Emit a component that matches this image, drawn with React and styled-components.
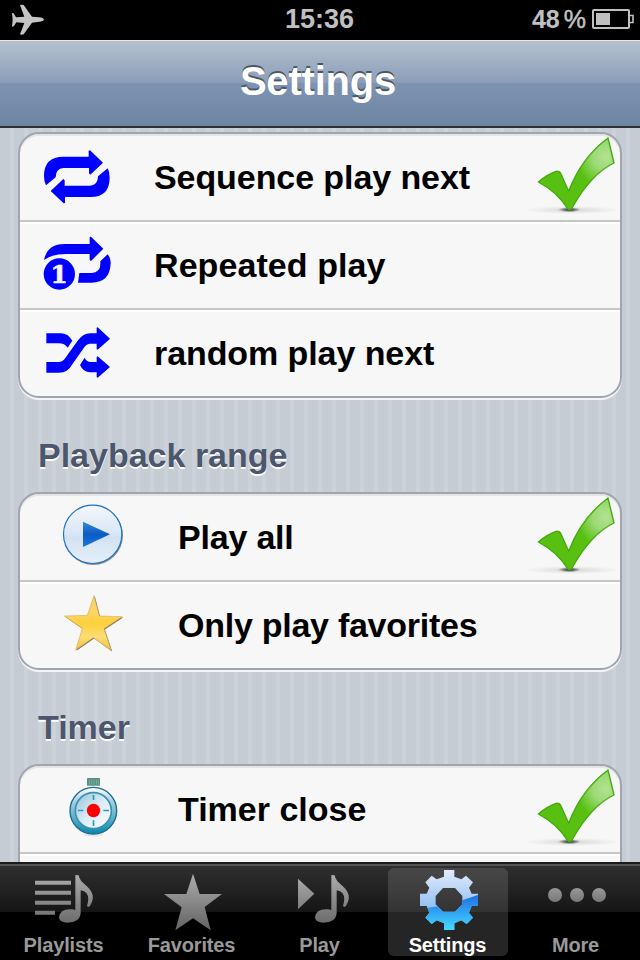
import styled, {createGlobalStyle} from "styled-components";

const GlobalStyle = createGlobalStyle`
  * {
    box-sizing: border-box;
  }
  body {
    margin: 0;
    background: #000;
    font-family: "Liberation Sans", Arial, sans-serif;
    font-weight: bold;
  }
`;

const Screen = styled.div`
  display: flex;
  flex-direction: column;
  width: 640px;
  height: 960px;
  overflow: hidden;
`;

const StatusBar = styled.header`
  display: grid;
  grid-template-columns: 1fr auto 1fr;
  align-items: center;
  flex: none;
  height: 40px;
  padding: 0 6px 2px 12px;
  background: #000;
  color: #c0c0c0;
  svg {
    display: block;
  }
`;
const Clock = styled.span`
  padding: 1px 7px 0 0;
  font-size: 27px;
  line-height: 37px;
`;
const Power = styled.div`
  display: flex;
  align-items: center;
  justify-content: flex-end;
  font-size: 25px;
  line-height: 38px;
`;
const Percent = styled.span`
  margin: 0 6px 0 4px;
  font-weight: normal;
  -webkit-text-stroke: 0.5px #c0c0c0;
`;

const NavBar = styled.div`
  flex: none;
  height: 88px;
  border-top: 1px solid #e3e6e2;
  border-bottom: 2px solid #2d3035;
  background: linear-gradient(#b5c1cf, #8a9cb7 50%, #7e93b2 50%, #6e84a3);
  text-align: center;
`;
const Title = styled.h1`
  margin: 0;
  padding-right: 4px;
  font-size: 40px;
  line-height: 80px;
  letter-spacing: -0.2px;
  color: #fff;
  text-shadow: 0 -2px 0 #4b5766;
`;

const Content = styled.main`
  flex: 1;
  min-height: 0;
  overflow: hidden;
  padding: 4px 18px 0;
  background: repeating-linear-gradient(90deg, #c5ccd4 0 10px, #cbd2d9 10px 14px);
`;
const SectionTitle = styled.h2`
  margin: 0;
  height: 94px;
  padding: 9px 0 0 20px;
  font-size: 34px;
  line-height: 96px;
  color: #4c566c;
  text-shadow: 0 2px 0 #fff;
`;
const Card = styled.section`
  border: 2px solid #a0a5ad;
  border-radius: 21px;
  background: #f7f7f7;
  box-shadow: 0 2px 0 #f3f5f6, inset 0 2px 0 #e4e5e6;
`;
const Row = styled.div`
  display: flex;
  height: 86px;
  & + & {
    height: 88px;
    border-top: 2px solid #c6c6c7;
    box-shadow: inset 0 2px 0 #fff;
  }
`;
const IconSlot = styled.div`
  flex: none;
  width: ${({$wide}) => ($wide ? 158 : 134)}px;
  padding: ${({$top}) => $top}px 0 0 ${({$left}) => $left}px;
  svg {
    display: block;
  }
`;
const Label = styled.span`
  flex: 1;
  font-size: 34px;
  line-height: 86px;
  letter-spacing: ${({$tracking}) => $tracking || 0}px;
  color: #000;
  white-space: nowrap;
`;

const TabBar = styled.nav`
  display: grid;
  grid-template-columns: repeat(5, 1fr);
  flex: none;
  height: 98px;
  border-top: 2px solid #1b1b1c;
  background: linear-gradient(#545454 0 2px, #2f2f2f 2px, #151515 48px, #000 48px);
  padding: 4px 0;
`;
const Tab = styled.div`
  display: flex;
  flex-direction: column;
  align-items: center;
  height: 88px;
  margin: 0 4px;
  border-radius: 6px;
  background: ${({$active}) => ($active ? "linear-gradient(#484848, #333 44px, #252525 44px)" : "none")};
  color: ${({$active}) => ($active ? "#fff" : "#999")};
  svg {
    display: block;
    flex: none;
  }
`;
const TabLabel = styled.span`
  margin-top: 1px;
  padding-right: 1px;
  font-size: 20px;
  line-height: 24px;
  letter-spacing: -0.15px;
`;

const BLUE = "#0000ff";

function PlaneIcon() {
    return (
        <svg width="32" height="31" viewBox="36 10 96 93" fill="#c4c4c4">
            <path d="M132 57Q130 51 118 50L96 48 71 13Q66 11 60 13L73 48 48 50 41 38 36 37 38 57 36 78 42 76 49 65 73 67 60 101Q66 103 71 101L96 66 118 63Q130 62 132 57Z"/>
        </svg>
    );
}

function BatteryIcon() {
    return (
        <svg width="42" height="20" viewBox="0 0 42 20">
            <rect x="1" y="1" width="36" height="18" rx="1" fill="none" stroke="#c0c0c0" strokeWidth="2"/>
            <rect x="4" y="4" width="14" height="12" fill="#c0c0c0"/>
            <path d="M38 6.5h3v7h-3" fill="none" stroke="#c0c0c0" strokeWidth="1.6"/>
        </svg>
    );
}

function SequenceIcon() {
    const arrow = "M18 118Q12 108 12 90Q12 32 70 32H146V14L150 13 189 50 151 86 147 82V66H70Q47 68 47 94Z";
    return (
        <svg width="72" height="60" viewBox="0 0 216 180" fill={BLUE}>
            <path d={arrow}/>
            <path d={arrow} transform="rotate(180 110.5 92.5)"/>
        </svg>
    );
}

function RepeatOneIcon() {
    return (
        <svg width="72" height="60" viewBox="0 0 216 180" fill={BLUE}>
            <path d="M12 78Q22 30 72 30H149V9L153 8 190 44 153 81 149 78V60H78Q35 60 12 78Z"/>
            <path d="M203 61Q212 72 212 88Q210 146 155 146H114L118 117H155Q181 115 181 90V82Z"/>
            <circle cx="58" cy="120" r="47"/>
            <text
                x="57"
                y="148"
                fill="#f7f7f7"
                stroke="#f7f7f7"
                strokeWidth="2"
                fontSize="74"
                fontFamily="'DejaVu Serif'"
                fontWeight="bold"
                textAnchor="middle"
            >
                1
            </text>
        </svg>
    );
}

function ShuffleIcon() {
    return (
        <svg width="72" height="60" viewBox="0 0 216 180" fill={BLUE}>
            <path d="M19 34H62Q84 34 97 56L83 77Q74 64 56 64H19Z"/>
            <path d="M19 120H56Q68 120 76 108L114 55Q130 34 150 34H170V17L173 16 210 50 173 83 170 81V65H148Q140 66 134 74L98 125Q84 152 56 152H19Z"/>
            <path d="M134 107L120 129Q130 151 150 151H170V165L173 167 210 135 173 103 170 105V120H152Q140 120 134 107Z"/>
        </svg>
    );
}

function PlayAllIcon() {
    return (
        <svg width="66" height="70" viewBox="0 0 198 210">
            <defs>
                <linearGradient id="disc" x2="0" y2="1">
                    <stop offset="0" stopColor="#f3f7fd"/>
                    <stop offset="0.5" stopColor="#d9e6f4"/>
                    <stop offset="0.55" stopColor="#d2e2f2"/>
                    <stop offset="1" stopColor="#e6effa"/>
                </linearGradient>
                <linearGradient id="arrow" x2="0" y2="1">
                    <stop offset="0" stopColor="#3c86d8"/>
                    <stop offset="0.5" stopColor="#0a5cc4"/>
                    <stop offset="1" stopColor="#1b78dc"/>
                </linearGradient>
            </defs>
            <circle cx="100" cy="106" r="89" fill="#444" opacity="0.6"/>
            <circle cx="98" cy="103" r="87.500" fill="url(#disc)" stroke="#1c70c8" strokeWidth="3.5"/>
            <path d="M69 65L150 103 69 141Z" fill="url(#arrow)"/>
        </svg>
    );
}

function FavoriteIcon() {
    const star = "M102 16L118 78 187 80 132 116 154 182 100 143 47 180 67 115 13 78 82 76Z";
    return (
        <svg width="66" height="66" viewBox="0 0 198 198">
            <defs>
                <linearGradient id="gold" x2="0" y2="1">
                    <stop offset="0" stopColor="#f6cf6a"/>
                    <stop offset="0.3" stopColor="#fcd667"/>
                    <stop offset="0.5" stopColor="#ffd03a"/>
                    <stop offset="0.75" stopColor="#fbdd72"/>
                    <stop offset="1" stopColor="#f5bd38"/>
                </linearGradient>
            </defs>
            <path d={star} fill="#4b453a" opacity="0.75" transform="translate(2.5 2.5)"/>
            <path d={star} fill="url(#gold)" stroke="#c9a052" strokeWidth="1.5"/>
        </svg>
    );
}

function TimerIcon() {
    return (
        <svg width="54" height="62" viewBox="0 0 162 186">
            <defs>
                <linearGradient id="ring" x2="0" y2="1">
                    <stop offset="0" stopColor="#fff"/>
                    <stop offset="0.3" stopColor="#a9cfe2"/>
                    <stop offset="0.65" stopColor="#5fb0cd"/>
                    <stop offset="1" stopColor="#0785b0"/>
                </linearGradient>
                <linearGradient id="face" x2="1" y2="1">
                    <stop offset="0" stopColor="#8fc3dc"/>
                    <stop offset="0.5" stopColor="#dcebf4"/>
                    <stop offset="1" stopColor="#fff"/>
                </linearGradient>
            </defs>
            <ellipse cx="82" cy="177" rx="30" ry="5" fill="#e6e6e6"/>
            <rect x="63" y="6" width="39" height="23" rx="2" fill="#578d80"/>
            <path d="M70 10V26M77 10V26M84 10V26M91 10V26M97 10V26" stroke="#84b5a8" strokeWidth="2.5"/>
            <circle cx="82" cy="104" r="70" fill="url(#ring)" stroke="#1d6d8c" strokeWidth="4"/>
            <circle cx="82" cy="104" r="54" fill="url(#face)" stroke="#3a91b0" strokeWidth="5"/>
            <path d="M82.500 57V72M82.500 133V150M36 103.500H52M112 103.500H129" stroke="#2b9ac0" strokeWidth="5"/>
            <circle cx="82.500" cy="103.500" r="20" fill="#ff0000"/>
        </svg>
    );
}

function CheckMark() {
    return (
        <svg width="92" height="86" viewBox="84 42 276 258">
            <defs>
                <radialGradient id="green" gradientUnits="userSpaceOnUse" cx="318" cy="110" r="90">
                    <stop offset="0" stopColor="#b3e391"/>
                    <stop offset="0.45" stopColor="#9bd975"/>
                    <stop offset="1" stopColor="#58c010"/>
                </radialGradient>
                <radialGradient id="glow">
                    <stop offset="0" stopColor="#000" stopOpacity="0.13"/>
                    <stop offset="1" stopColor="#000" stopOpacity="0"/>
                </radialGradient>
                <radialGradient id="core">
                    <stop offset="0" stopColor="#000" stopOpacity="0.85"/>
                    <stop offset="1" stopColor="#000" stopOpacity="0"/>
                </radialGradient>
            </defs>
            <ellipse cx="216" cy="270" rx="144" ry="12" fill="url(#glow)"/>
            <ellipse cx="208" cy="269" rx="34" ry="8" fill="url(#core)"/>
            <path
                d="M115 186Q140 164 168 154Q178 151 183 162L206 214Q244 113 324 54L342 129Q275 160 216 264Q210 272 203 266Q170 215 115 186Z"
                fill="url(#green)"
                stroke="#44aa0b"
                strokeWidth="4"
                strokeLinejoin="round"
            />
        </svg>
    );
}

function GrayGradient() {
    return (
        <linearGradient id="gray" gradientUnits="userSpaceOnUse" x1="0" y1="20" x2="0" y2="186">
            <stop offset="0" stopColor="#acacac"/>
            <stop offset="1" stopColor="#636363"/>
        </linearGradient>
    );
}

const NOTE = "M130 22Q135 20 140 22Q142 38 164 54Q197 84 171 117L165 115Q178 72 146 67V136Q144 164 104 164Q81 162 81 148Q84 122 118 124Q126 124 130 126Z";

function PlaylistsIcon() {
    return (
        <svg width="64" height="64" viewBox="0 0 192 192" fill="url(#gray)">
            <defs><GrayGradient/></defs>
            <path d="M9 38H117V50H9ZM9 68H117V80H9ZM9 98H117V110H9ZM9 128H69V140H9Z"/>
            <path d={NOTE}/>
        </svg>
    );
}

function StarIcon() {
    return (
        <svg width="64" height="64" viewBox="0 0 192 192" fill="url(#gray)">
            <path d="M99 17L119 78H186L134 117 152 187 99 151 46 187 65 118 12 78H79Z"/>
        </svg>
    );
}

function PlayNoteIcon() {
    return (
        <svg width="64" height="64" viewBox="0 0 192 192" fill="url(#gray)">
            <path d="M30 32L79 77 30 124Z"/>
            <path d={NOTE}/>
        </svg>
    );
}

function GearIcon() {
    return (
        <svg width="64" height="64" viewBox="528 54 192 192">
            <defs>
                <linearGradient id="pale" x2="0" y2="1">
                    <stop offset="0" stopColor="#e8edfb"/>
                    <stop offset="1" stopColor="#5ea4ee"/>
                </linearGradient>
                <linearGradient id="deep" gradientUnits="userSpaceOnUse" x1="0" y1="130" x2="0" y2="240">
                    <stop offset="0" stopColor="#1c69e4"/>
                    <stop offset="1" stopColor="#45dcff"/>
                </linearGradient>
                <clipPath id="gear">
                    <path
                        clipRule="evenodd"
                        d="M612 60H643V80L664 88 678 77 699 97 687 113 695 131H714V168H695L687 188 699 203 680 222 664 211 643 220V240H612V220L590 211 575 222 556 203 568 188 560 168H540V131H560L568 113 556 97 575 77 590 88 612 80ZM609 114L587 138V163L609 185H645L667 163V138L645 114Z"
                    />
                </clipPath>
            </defs>
            <g clipPath="url(#gear)">
                <rect x="528" y="54" width="192" height="192" fill="url(#pale)"/>
                <path d="M528 178Q620 170 720 133V246H528Z" fill="url(#deep)"/>
            </g>
        </svg>
    );
}

function MoreIcon() {
    return (
        <svg width="64" height="64" viewBox="0 0 192 192">
            <defs>
                <linearGradient id="dot" x2="0" y2="1">
                    <stop offset="0" stopColor="#989898"/>
                    <stop offset="1" stopColor="#777"/>
                </linearGradient>
            </defs>
            {[33, 99, 165].map((cx) => <circle key={cx} cx={cx} cy="81" r="21" fill="url(#dot)"/>)}
        </svg>
    );
}

const sections = [
    {
        rows: [
            {text: "Sequence play next", Icon: SequenceIcon, left: 20, top: 12, tracking: -0.08, checked: true},
            {text: "Repeated play", Icon: RepeatOneIcon, left: 20, top: 12, tracking: 0.08},
            {text: "random play next", Icon: ShuffleIcon, left: 20, top: 12, tracking: -0.08},
        ],
    },
    {
        title: "Playback range",
        wide: true,
        rows: [
            {text: "Play all", Icon: PlayAllIcon, left: 40, top: 6, tracking: -0.2, checked: true},
            {text: "Only play favorites", Icon: FavoriteIcon, left: 40, top: 8, tracking: -0.26},
        ],
    },
    {
        title: "Timer",
        wide: true,
        rows: [
            {text: "Timer close", Icon: TimerIcon, left: 46, top: 10, checked: true},
            {text: ""},
        ],
    },
];

const tabs = [
    {text: "Playlists", Icon: PlaylistsIcon},
    {text: "Favorites", Icon: StarIcon},
    {text: "Play", Icon: PlayNoteIcon},
    {text: "Settings", Icon: GearIcon, active: true},
    {text: "More", Icon: MoreIcon},
];

function SettingRow({item, wide}) {
    const {text, Icon, left, top, tracking, checked} = item;

    return (
        <Row>
            {Icon && <IconSlot $wide={wide} $left={left} $top={top}><Icon/></IconSlot>}
            <Label $tracking={tracking}>{text}</Label>
            {checked && <CheckMark/>}
        </Row>
    );
}

function App() {
    return (
        <Screen>
            <GlobalStyle/>
            <StatusBar>
                <PlaneIcon/>
                <Clock>15:36</Clock>
                <Power>
                    48<Percent>%</Percent>
                    <BatteryIcon/>
                </Power>
            </StatusBar>
            <NavBar>
                <Title>Settings</Title>
            </NavBar>
            <Content>
                {sections.map(({title, wide, rows}, i) => (
                    <div key={i}>
                        {title && <SectionTitle>{title}</SectionTitle>}
                        <Card>
                            {rows.map((item, j) => <SettingRow key={j} item={item} wide={wide}/>)}
                        </Card>
                    </div>
                ))}
            </Content>
            <TabBar>
                {tabs.map(({text, Icon, active}) => (
                    <Tab key={text} $active={active}>
                        <Icon/>
                        <TabLabel>{text}</TabLabel>
                    </Tab>
                ))}
            </TabBar>
        </Screen>
    );
}

export default App;
